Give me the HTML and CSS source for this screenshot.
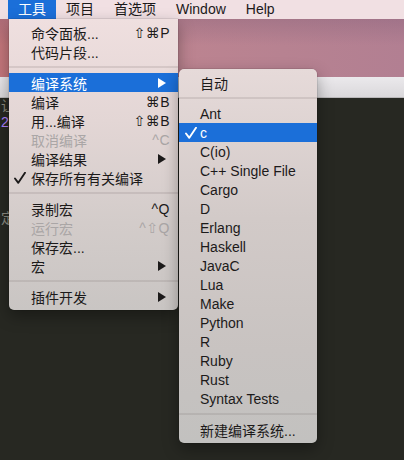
FILE: index.html
```html
<!DOCTYPE html>
<html lang="zh-CN">
<head>
<meta charset="utf-8">
<title>Menu</title>
<link rel="stylesheet" href="styles.css">
</head>
<body>
<div class="screen">
  <div class="menubar">
    <span class="mb-item active">工具</span>
    <span class="mb-item">项目</span>
    <span class="mb-item">首选项</span>
    <span class="mb-item">Window</span>
    <span class="mb-item">Help</span>
  </div>
  <div class="desktop"></div>
  <div class="titlebar"></div>
  <div class="editor">
    <div class="code">
      <div class="ln gray">让</div>
      <div class="ln purple">2</div>
      <div class="ln"></div>
      <div class="ln"></div>
      <div class="ln"></div>
      <div class="ln"></div>
      <div class="ln"></div>
      <div class="ln gray">定</div>
    </div>
  </div>

  <div class="menu main">
    <div class="row"><span class="chk"></span><span class="lbl">命令面板...</span><span class="sc">⇧⌘P</span></div>
    <div class="row"><span class="chk"></span><span class="lbl">代码片段...</span></div>
    <div class="sep"></div>
    <div class="row hl"><span class="chk"></span><span class="lbl">编译系统</span><svg class="arr" width="8" height="10" viewBox="0 0 8 10"><path d="M0 0 L8 5 L0 10 Z" fill="currentColor"/></svg></div>
    <div class="row"><span class="chk"></span><span class="lbl">编译</span><span class="sc">⌘B</span></div>
    <div class="row"><span class="chk"></span><span class="lbl">用...编译</span><span class="sc">⇧⌘B</span></div>
    <div class="row dis"><span class="chk"></span><span class="lbl">取消编译</span><span class="sc">^C</span></div>
    <div class="row"><span class="chk"></span><span class="lbl">编译结果</span><svg class="arr" width="8" height="10" viewBox="0 0 8 10"><path d="M0 0 L8 5 L0 10 Z" fill="currentColor"/></svg></div>
    <div class="row"><span class="chk"><svg width="12" height="12" viewBox="0 0 12 12"><path d="M1 6.5 L4.3 10.8 L11 0.8" fill="none" stroke="currentColor" stroke-width="1.9" stroke-linecap="round" stroke-linejoin="round"/></svg></span><span class="lbl">保存所有有关编译</span></div>
    <div class="sep"></div>
    <div class="row"><span class="chk"></span><span class="lbl">录制宏</span><span class="sc">^Q</span></div>
    <div class="row dis"><span class="chk"></span><span class="lbl">运行宏</span><span class="sc">^⇧Q</span></div>
    <div class="row"><span class="chk"></span><span class="lbl">保存宏...</span></div>
    <div class="row"><span class="chk"></span><span class="lbl">宏</span><svg class="arr" width="8" height="10" viewBox="0 0 8 10"><path d="M0 0 L8 5 L0 10 Z" fill="currentColor"/></svg></div>
    <div class="sep"></div>
    <div class="row"><span class="chk"></span><span class="lbl">插件开发</span><svg class="arr" width="8" height="10" viewBox="0 0 8 10"><path d="M0 0 L8 5 L0 10 Z" fill="currentColor"/></svg></div>
  </div>

  <div class="menu sub">
    <div class="row"><span class="chk"></span><span class="lbl">自动</span></div>
    <div class="sep"></div>
    <div class="row"><span class="chk"></span><span class="lbl">Ant</span></div>
    <div class="row hl"><span class="chk"><svg width="12" height="12" viewBox="0 0 12 12"><path d="M1 6.5 L4.3 10.8 L11 0.8" fill="none" stroke="currentColor" stroke-width="1.9" stroke-linecap="round" stroke-linejoin="round"/></svg></span><span class="lbl">c</span></div>
    <div class="row"><span class="chk"></span><span class="lbl">C(io)</span></div>
    <div class="row"><span class="chk"></span><span class="lbl">C++ Single File</span></div>
    <div class="row"><span class="chk"></span><span class="lbl">Cargo</span></div>
    <div class="row"><span class="chk"></span><span class="lbl">D</span></div>
    <div class="row"><span class="chk"></span><span class="lbl">Erlang</span></div>
    <div class="row"><span class="chk"></span><span class="lbl">Haskell</span></div>
    <div class="row"><span class="chk"></span><span class="lbl">JavaC</span></div>
    <div class="row"><span class="chk"></span><span class="lbl">Lua</span></div>
    <div class="row"><span class="chk"></span><span class="lbl">Make</span></div>
    <div class="row"><span class="chk"></span><span class="lbl">Python</span></div>
    <div class="row"><span class="chk"></span><span class="lbl">R</span></div>
    <div class="row"><span class="chk"></span><span class="lbl">Ruby</span></div>
    <div class="row"><span class="chk"></span><span class="lbl">Rust</span></div>
    <div class="row"><span class="chk"></span><span class="lbl">Syntax Tests</span></div>
    <div class="sep"></div>
    <div class="row"><span class="chk"></span><span class="lbl">新建编译系统...</span></div>
  </div>
</div>
</body>
</html>
```

FILE: styles.css
```css
* { box-sizing: border-box; }
html, body { margin: 0; padding: 0; }
body {
  width: 404px;
  height: 460px;
  overflow: hidden;
  background: #272822;
  font-family: "Liberation Sans", "Noto Sans CJK SC", sans-serif;
  font-size: 14px;
  color: #1c1a1a;
}
.screen {
  position: relative;
  width: 404px;
  height: 460px;
  display: flex;
  flex-direction: column;
}
.menubar {
  height: 19px;
  flex: none;
  display: flex;
  align-items: stretch;
  padding-left: 8px;
  background: #f1e0e3;
  line-height: 19px;
}
.mb-item {
  padding: 0 10px;
  color: #1c1a1a;
}
.mb-item.active {
  background: #1b6fd9;
  color: #fff;
}
.desktop {
  height: 58px;
  flex: none;
  background:
    linear-gradient(180deg, rgba(110,80,110,0.25) 0%, rgba(110,80,110,0) 45%),
    linear-gradient(90deg, #c4767b 0%, #bd8490 40%, #b78291 70%, #b27f92 100%);
}
.titlebar {
  height: 21px;
  flex: none;
  background: linear-gradient(180deg, #ebe9ec 0%, #dad8db 100%);
  border-bottom: 1px solid #b9b7b9;
}
.editor {
  flex: 1;
  background: #272822;
  overflow: hidden;
}
.code {
  padding-left: 1px;
  line-height: 16px;
  font-size: 14px;
}
.ln { height: 16px; white-space: nowrap; }
.gray { color: #8c8b80; }
.purple { color: #ae81ff; }

.menu {
  position: absolute;
  padding: 4px 0;
  box-shadow: 0 6px 16px rgba(0,0,0,0.35), 0 0 0 0.5px rgba(0,0,0,0.15);
}
.menu.main {
  left: 9px;
  top: 19px;
  width: 169px;
  border-radius: 0 0 5px 5px;
  background: linear-gradient(180deg, #efdfdf 0%, #e3d6d5 35%, #d3ccca 70%, #c9c5c3 100%);
}
.menu.sub {
  left: 179px;
  top: 69px;
  width: 138px;
  border-radius: 5px;
  background: linear-gradient(180deg, #e6dad9 0%, #d2cac8 40%, #c8c3c1 75%, #c2c1bf 100%);
}
.row {
  height: 19px;
  display: flex;
  align-items: center;
  padding-left: 5px;
  padding-right: 8px;
  white-space: nowrap;
}
.sub .row { padding-left: 6px; }
.chk {
  width: 17px;
  flex: none;
  display: flex;
  align-items: center;
}
.sub .chk { width: 15px; }
.chk svg { display: block; }
.lbl { flex: 1; }
.sc {
  font-family: "Liberation Sans", "DejaVu Sans", sans-serif;
  letter-spacing: 0.5px;
}
.arr { margin-right: 4px; flex: none; }
.row.hl {
  background: #1b6fd9;
  color: #fff;
}
.row.dis { color: #aaa6a6; }
.sep {
  height: 12px;
  display: flex;
  align-items: center;
}
.sep::before {
  content: "";
  display: block;
  width: 100%;
  height: 2px;
  background: rgba(120,110,110,0.18);
}
```
